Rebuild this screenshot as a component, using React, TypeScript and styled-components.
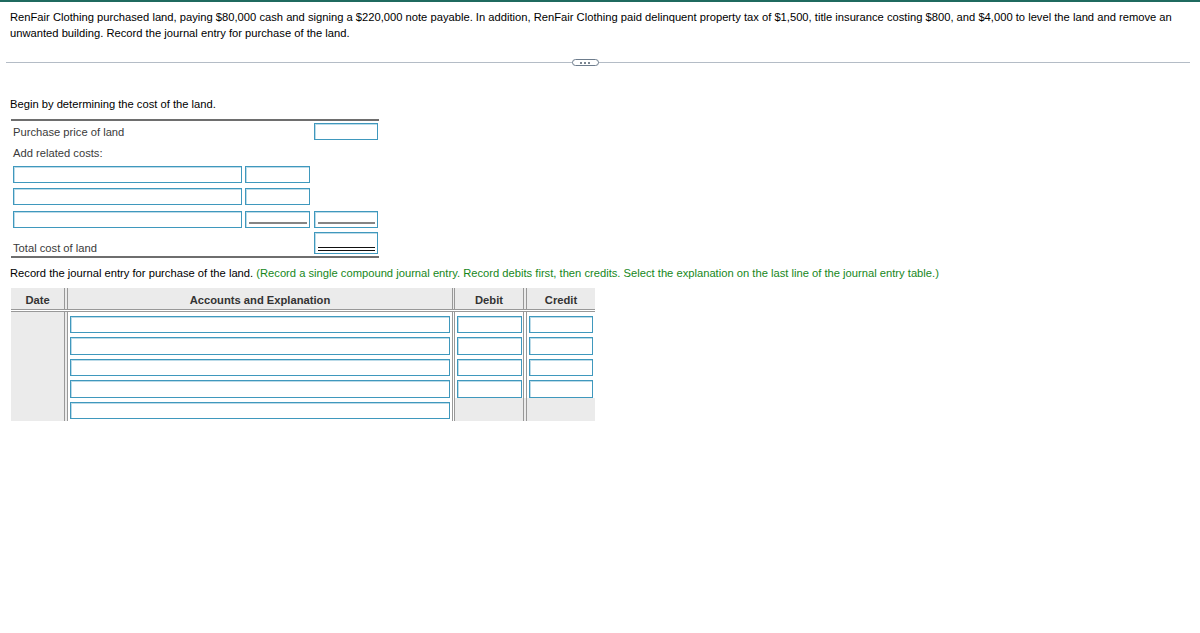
import React from "react";
import styled, { createGlobalStyle } from "styled-components";

const GlobalStyle = createGlobalStyle`
  html, body { margin: 0; padding: 0; background: #fff; }
  body {
    font-family: "Liberation Sans", Arial, Helvetica, sans-serif;
    font-size: 11.2px;
    line-height: 16px;
    color: #000;
  }
`;

const Page = styled.div`
  width: 1200px;
  min-height: 633px;
  display: flex;
  flex-direction: column;
`;

const TopBar = styled.div`
  height: 2px;
  background: #1f6a5f;
`;

const Question = styled.p`
  margin: 7px 0 0;
  padding: 0 20px 0 10px;
  line-height: 16px;
`;

const Divider = styled.div`
  margin: 16px 10px 0 6px;
  height: 11px;
  display: flex;
  align-items: center;
  justify-content: center;
  position: relative;
  &::before {
    content: "";
    position: absolute;
    left: 0;
    right: 0;
    top: 5px;
    height: 1px;
    background: #b4bcc6;
  }
`;

const Pill = styled.div`
  position: relative;
  margin-left: -26px;
  width: 25px;
  height: 5px;
  border: 1px solid #6d7c8c;
  border-radius: 4px;
  background: #fff;
  display: flex;
  align-items: center;
  justify-content: center;
  gap: 2px;
`;

const Dot = styled.span`
  width: 2px;
  height: 2px;
  border-radius: 50%;
  background: #4f5e6e;
`;

const Lead = styled.div`
  margin: 28px 0 0 10px;
`;

const CostTable = styled.div`
  margin: 7px 0 0 11px;
  width: 368px;
  box-sizing: border-box;
  padding: 0 1px 0 2px;
  border-top: 2px solid #6e6e6e;
  border-bottom: 2px solid #6e6e6e;
  display: flex;
  flex-direction: column;
`;

const CostRow = styled.div<{ $top: number; $h?: number }>`
  display: grid;
  grid-template-columns: 229px 68px 68px;
  margin-top: ${(p) => p.$top}px;
  height: ${(p) => p.$h ?? 17}px;
  & > *:nth-child(2) { margin-left: 3px; }
  & > *:nth-child(3) { margin-left: 4px; }
`;

const CostLabel = styled.div<{ $end?: boolean }>`
  color: #3a3a3a;
  align-self: ${(p) => (p.$end ? "end" : "center")};
  white-space: nowrap;
`;

const LabelRow = styled.div`
  height: 26px;
  display: flex;
  align-items: center;
  color: #3a3a3a;
`;

const Box = styled.div<{ $rule?: "single" | "double"; $h?: number }>`
  position: relative;
  box-sizing: border-box;
  height: ${(p) => p.$h ?? 17}px;
  border: 1px solid #3f98bd;
  box-shadow: inset 1px 1px 0 #bcdbe8;
  background: #fff;
  &::after {
    content: ${(p) => (p.$rule ? '""' : "none")};
    position: absolute;
    left: 3px;
    right: 2px;
    bottom: ${(p) => (p.$rule === "double" ? 2 : 3)}px;
    height: ${(p) => (p.$rule === "double" ? 1 : 2)}px;
    background: ${(p) => (p.$rule === "double" ? "#111" : "#858585")};
    ${(p) => (p.$rule === "double" ? "box-shadow: 0 -3px 0 #111;" : "")}
  }
`;

const Spacer = styled.div``;

const Instruction = styled.div`
  margin: 7px 0 0 10px;
`;

const Hint = styled.span`
  color: #16871a;
`;

const Journal = styled.div`
  margin: 7px 0 0 11px;
  width: 584px;
  display: flex;
  flex-direction: column;
`;

const JRow = styled.div<{ $header?: boolean; $h?: number }>`
  display: grid;
  grid-template-columns: 57px 387px 72px 68px;
  height: ${(p) => p.$h ?? 21.5}px;
  ${(p) => (p.$header ? "border-bottom: 3px double #989898;" : "")}
`;

const Cell = styled.div<{ $sep?: number; $white?: boolean; $header?: boolean; $pl?: number; $pr?: number }>`
  box-sizing: border-box;
  background: ${(p) => (p.$white ? "#fff" : "#ebebeb")};
  ${(p) => (p.$sep ? `border-right: ${p.$sep}px double #989898;` : "")}
  padding: ${(p) => (p.$header ? "3px 0 0" : `4px ${p.$pr ?? 2}px 0 ${p.$pl ?? 2}px`)};
  ${(p) =>
    p.$header
      ? `display:flex;align-items:center;justify-content:center;font-weight:bold;color:#333;`
      : ""}
`;

const Input = styled.div`
  box-sizing: border-box;
  height: 17.5px;
  border: 1px solid #3f98bd;
  box-shadow: inset 1px 1px 0 #bcdbe8;
  background: #fff;
`;

export default function App() {
  const rows = [0, 1, 2, 3, 4];
  return (
    <Page>
      <GlobalStyle />
      <TopBar />
      <Question>
        RenFair Clothing purchased land, paying $80,000 cash and signing a $220,000 note payable. In addition, RenFair
        Clothing paid delinquent property tax of $1,500, title insurance costing $800, and $4,000 to level the land and
        remove an unwanted building. Record the journal entry for purchase of the land.
      </Question>
      <Divider>
        <Pill>
          <Dot />
          <Dot />
          <Dot />
        </Pill>
      </Divider>
      <Lead>Begin by determining the cost of the land.</Lead>
      <CostTable>
        <CostRow $top={2}>
          <CostLabel>Purchase price of land</CostLabel>
          <Spacer />
          <Box />
        </CostRow>
        <LabelRow>Add related costs:</LabelRow>
        <CostRow $top={0}>
          <Box />
          <Box />
          <Spacer />
        </CostRow>
        <CostRow $top={5}>
          <Box />
          <Box />
          <Spacer />
        </CostRow>
        <CostRow $top={6}>
          <Box />
          <Box $rule="single" />
          <Box $rule="single" />
        </CostRow>
        <CostRow $top={4} $h={24}>
          <CostLabel $end>Total cost of land</CostLabel>
          <Spacer />
          <Box $rule="double" $h={22} />
        </CostRow>
      </CostTable>
      <Instruction>
        Record the journal entry for purchase of the land.{" "}
        <Hint>
          (Record a single compound journal entry. Record debits first, then credits. Select the explanation on the last
          line of the journal entry table.)
        </Hint>
      </Instruction>
      <Journal>
        <JRow $header $h={20.5}>
          <Cell $header $sep={4}>Date</Cell>
          <Cell $header $sep={3}>Accounts and Explanation</Cell>
          <Cell $header $sep={4}>Debit</Cell>
          <Cell $header>Credit</Cell>
        </JRow>
        {rows.map((r) => {
          const last = r === rows.length - 1;
          return (
            <JRow key={r} $h={last ? 23.5 : 21.5}>
              <Cell $sep={4} />
              <Cell $sep={3} $white>
                <Input />
              </Cell>
              <Cell $sep={4} $white={!last} $pl={2} $pr={1}>
                {!last && <Input />}
              </Cell>
              <Cell $white={!last} $pl={2} $pr={2}>
                {!last && <Input />}
              </Cell>
            </JRow>
          );
        })}
      </Journal>
    </Page>
  );
}
